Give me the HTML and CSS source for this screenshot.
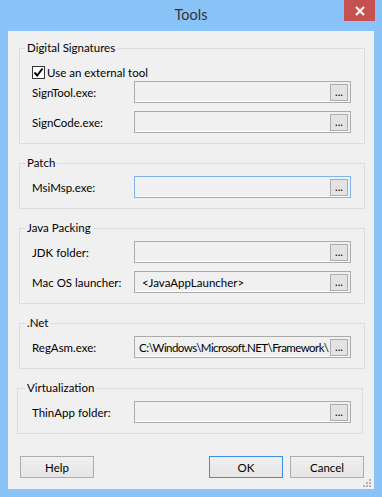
FILE: index.html
```html
<!DOCTYPE html>
<html lang="en">
<head>
  <meta charset="UTF-8" />
  <title>Tools</title>
  <link rel="stylesheet" href="styles.css">
</head>
<body>
  <div class="window">
    <div class="titlebar">
      <span></span>
      <div class="title">Tools</div>
      <div class="close">
        <svg width="10" height="10" viewBox="0 0 10 10"><path d="M1 1 L9 9 M9 1 L1 9" stroke="#fff" stroke-width="2"/></svg>
      </div>
    </div>

    <div class="client">
      <div class="group">
        <div class="legend">Digital Signatures</div>
        <label class="check">
          <span class="box"><svg width="11" height="11" viewBox="0 0 11 11"><path d="M1.5 5.5 L4.2 8.5 L9.5 1.5" fill="none" stroke="#000" stroke-width="2"/></svg></span>
          Use an external tool
        </label>
        <div class="rows">
          <div class="row"><span>SignTool.exe:</span><div class="field"><span class="value"></span><span class="browse">...</span></div></div>
          <div class="row"><span>SignCode.exe:</span><div class="field"><span class="value"></span><span class="browse">...</span></div></div>
        </div>
      </div>

      <div class="group">
        <div class="legend">Patch</div>
        <div class="rows">
          <div class="row"><span>MsiMsp.exe:</span><div class="field focus"><span class="value"></span><span class="browse">...</span></div></div>
        </div>
      </div>

      <div class="group">
        <div class="legend">Java Packing</div>
        <div class="rows">
          <div class="row"><span>JDK folder:</span><div class="field"><span class="value"></span><span class="browse">...</span></div></div>
          <div class="row"><span>Mac OS launcher:</span><div class="field"><span class="value">&nbsp;&lt;JavaAppLauncher&gt;</span><span class="browse">...</span></div></div>
        </div>
      </div>

      <div class="group">
        <div class="legend">.Net</div>
        <div class="rows">
          <div class="row"><span>RegAsm.exe:</span><div class="field"><span class="value tight">C:\Windows\Microsoft.NET\Framework\</span><span class="browse">...</span></div></div>
        </div>
      </div>

      <div class="group shift">
        <div class="legend">Virtualization</div>
        <div class="rows">
          <div class="row"><span>ThinApp folder:</span><div class="field"><span class="value"></span><span class="browse">...</span></div></div>
        </div>
      </div>

      <div class="buttons">
        <button class="btn help">Help</button>
        <button class="btn default">OK</button>
        <button class="btn">Cancel</button>
      </div>

      <div class="grip">
        <svg width="9" height="9" viewBox="0 0 9 9" fill="#b4b4b4">
          <rect x="6" y="0" width="2" height="2"/>
          <rect x="3" y="3" width="2" height="2"/><rect x="6" y="3" width="2" height="2"/>
          <rect x="0" y="6" width="2" height="2"/><rect x="3" y="6" width="2" height="2"/><rect x="6" y="6" width="2" height="2"/>
        </svg>
      </div>
    </div>
  </div>
</body>
</html>
```

FILE: styles.css
```css
body {
  margin: 0;
  font-family: Lato, "Noto Sans", sans-serif;
  font-size: 11.5px;
  color: #000;
}

.window {
  width: 382px;
  height: 497px;
  box-sizing: border-box;
  padding: 0 8px 8px;
  background: #8ac3f8;
  display: flex;
  flex-direction: column;
}

.titlebar {
  height: 31px;
  margin: 0 -8px;
  display: grid;
  grid-template-columns: 1fr auto 1fr;
}

.title {
  font-size: 14.5px;
  line-height: 30px;
  color: #333;
}

.close {
  justify-self: end;
  width: 31px;
  height: 21px;
  margin-right: 7px;
  background: #c75050;
  display: flex;
  align-items: center;
  justify-content: center;
}

.client {
  flex: 1;
  background: #f0f0f0;
  padding-top: 17px;
  display: flex;
  flex-direction: column;
}

.group {
  border: 1px solid #dcdcdc;
  margin: 0 9px 19px 11px;
  padding: 0 13px 10px 12px;
}

.group.shift {
  margin: 0 11px 0 9px;
  padding: 0 15px 10px 14px;
}

.legend {
  width: fit-content;
  height: 16px;
  line-height: 16px;
  margin: -9px 0 0 -7px;
  padding: 0 2px;
  background: #f0f0f0;
}

.check {
  display: flex;
  align-items: center;
  gap: 2px;
  height: 13px;
  margin-top: 10px;
}

.box {
  width: 13px;
  height: 13px;
  box-sizing: border-box;
  border: 1px solid #333;
  background: #fff;
  display: flex;
  align-items: center;
  justify-content: center;
}

.rows {
  display: flex;
  flex-direction: column;
  gap: 8px;
  margin-top: 5px;
}

.check + .rows {
  margin-top: 2px;
}

.row {
  display: grid;
  grid-template-columns: 102px 217px;
  align-items: center;
}

.field {
  height: 22px;
  box-sizing: border-box;
  border: 1px solid #ababab;
  box-shadow: inset 0 -1px #fff;
  background: #f0f0f0;
  padding: 0 2px 0 4px;
  display: flex;
  align-items: center;
}

.field.focus {
  border-color: #7eb4ea;
}

.value {
  flex: 1;
  overflow: hidden;
  white-space: nowrap;
}

.value.tight {
  letter-spacing: -0.55px;
}

.browse {
  width: 18px;
  height: 17px;
  box-sizing: border-box;
  border: 1px solid #adadad;
  background: #e3e3e3;
  font-size: 11px;
  line-height: 14px;
  text-align: center;
}

.buttons {
  display: flex;
  gap: 7px;
  margin: 22px 10px 0 12px;
}

.btn {
  width: 74px;
  height: 22px;
  box-sizing: border-box;
  border: 1px solid #adadad;
  background: linear-gradient(#f0f0f0, #e5e5e5);
  font: inherit;
  color: #000;
  padding: 0;
}

.btn.help {
  margin-right: auto;
}

.btn.default {
  border-color: #3d8fe6;
}

.grip {
  margin: auto 2px 1px 0;
  align-self: flex-end;
  height: 9px;
}

.grip svg {
  display: block;
}
```
